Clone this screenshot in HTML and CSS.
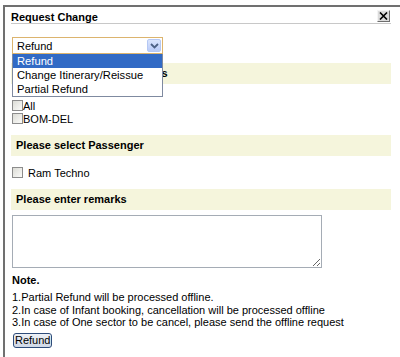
FILE: index.html
```html
<!DOCTYPE html>
<html lang="en">

<head>
    <meta charset="UTF-8">
    <meta name="viewport" content="width=device-width, initial-scale=1.0">
    <link rel="stylesheet" href="styles.css">
</head>

<body>
    <div class="dialog">
        <div class="dialog-title">
            <span>Request Change</span>
            <span class="close-btn">
                <svg width="9" height="8" viewBox="0 0 9 8">
                    <path d="M1 0.5 L8 7.5 M8 0.5 L1 7.5" stroke="#000" stroke-width="1.6" fill="none" />
                </svg>
            </span>
        </div>

        <div class="type-select">
            <div class="select-box">
                <span>Refund</span>
                <span class="select-arrow">
                    <svg width="9" height="6" viewBox="0 0 9 6">
                        <path d="M1 1 L4.5 4.5 L8 1" stroke="#4d6185" stroke-width="1.8" fill="none" />
                    </svg>
                </span>
            </div>
            <ul class="select-list">
                <li class="selected">Refund</li>
                <li>Change Itinerary/Reissue</li>
                <li>Partial Refund</li>
            </ul>
        </div>

        <div class="section-head">Please select your Segments</div>
        <div class="check-list">
            <label class="check-row"><input type="checkbox">All</label>
            <label class="check-row"><input type="checkbox">BOM-DEL</label>
        </div>

        <div class="section-head">Please select Passenger</div>
        <label class="pax-row"><input type="checkbox"> Ram Techno</label>

        <div class="section-head">Please enter remarks</div>
        <textarea class="remarks"></textarea>

        <div class="note-title">Note.</div>
        <div class="note-lines">
            <div>1.Partial Refund will be processed offline.</div>
            <div>2.In case of Infant booking, cancellation will be processed offline</div>
            <div>3.In case of One sector to be cancel, please send the offline request</div>
        </div>

        <button class="refund-btn">Refund</button>
    </div>
</body>

</html>
```

FILE: styles.css
```css
body {
    margin: 0;
    background: #fff;
    font-family: "Liberation Sans", Arial, sans-serif;
    font-size: 11px;
    color: #000;
    overflow: hidden;
}

.dialog {
    box-sizing: border-box;
    margin: 5px 0 0 3px;
    min-height: calc(100vh - 5px);
    padding: 0 9px 0 6px;
    border-top: 2px solid #707070;
    border-left: 2px solid #707070;
}

/* title bar */
.dialog-title {
    display: flex;
    justify-content: space-between;
    align-items: flex-start;
    padding-top: 4px;
    line-height: 12px;
    font-weight: bold;
    border-bottom: 1px solid #c8c8c8;
}

.close-btn {
    box-sizing: border-box;
    display: flex;
    justify-content: center;
    align-items: center;
    width: 13px;
    height: 12px;
    margin: -1px 1px 0 0;
    background: #dcdcdc;
    border: 1px solid;
    border-color: #f4f4f4 #6e6e6e #6e6e6e #f4f4f4;
}

/* fake open select */
.type-select {
    position: relative;
    width: 151px;
    margin: 13px 0 0 1px;
}

.select-box {
    box-sizing: border-box;
    display: flex;
    justify-content: space-between;
    align-items: center;
    height: 17px;
    padding: 0 1px 0 4px;
    border: 1px solid #dcb46e;
    background: #fff;
}

.select-arrow {
    box-sizing: border-box;
    display: flex;
    justify-content: center;
    align-items: center;
    width: 14px;
    height: 13px;
    background: linear-gradient(#dbe5fd, #b9cbf8);
    border: 1px solid #b5c8f4;
    border-radius: 2px;
}

.select-list {
    position: absolute;
    top: 100%;
    left: 0;
    z-index: 2;
    box-sizing: border-box;
    width: 151px;
    margin: 0;
    padding: 0;
    list-style: none;
    background: #fff;
    border: 1px solid #7f8aa0;
    border-top: none;
    font-size: 11.2px;
}

.select-list li {
    height: 14px;
    line-height: 14px;
    padding-left: 4px;
}

.select-list li.selected {
    background: #316ac5;
    color: #fff;
}

/* yellow section headers */
.section-head {
    height: 21px;
    line-height: 21px;
    padding-left: 5px;
    background: #f5f5dc;
    font-weight: bold;
}

.type-select + .section-head {
    margin-top: 9px;
}

.check-list {
    margin-top: 16px;
    margin-bottom: 9px;
}

.check-row,
.pax-row {
    display: block;
    line-height: 13px;
}

input[type="checkbox"] {
    appearance: none;
    box-sizing: border-box;
    width: 11px;
    height: 11px;
    margin: 0 0 0 1px;
    vertical-align: -1px;
    border: 1px solid #8c8c8c;
    background: linear-gradient(135deg, #dcdcd6, #fbfbf9);
}

.pax-row {
    margin: 11px 0 9px;
}

.pax-row input {
    margin-right: 2px;
}

.remarks {
    display: block;
    box-sizing: border-box;
    width: 310px;
    height: 53px;
    margin: 5px 0 0 1px;
    border: 1px solid #a5acb5;
    font-family: inherit;
}

.note-title {
    margin-top: 6px;
    line-height: 13px;
    font-weight: bold;
    padding-left: 1px;
}

.note-lines {
    margin-top: 4px;
    line-height: 12.5px;
    padding-left: 1px;
}

.refund-btn {
    display: block;
    box-sizing: border-box;
    height: 15px;
    margin: 4px 0 0 2px;
    padding: 0 1px;
    font-family: inherit;
    font-size: 11px;
    line-height: 13px;
    color: #000;
    background: linear-gradient(#eef1f6, #cfd8e6);
    border: 1px solid #2e4c7a;
    border-radius: 3px;
}
```
